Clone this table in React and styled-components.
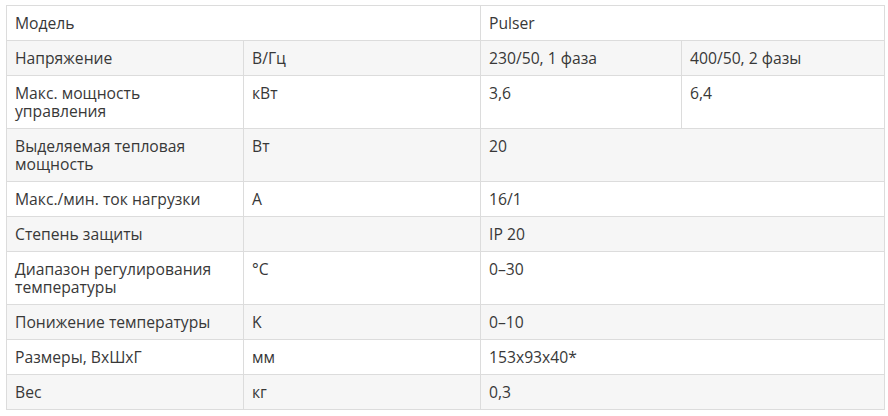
import React from "react";
import styled, { createGlobalStyle } from "styled-components";

const Global = createGlobalStyle`
  html, body { margin: 0; padding: 0; background: #fff; }
  body { font-family: "Open Sans", "Liberation Sans", sans-serif; }
`;

const Wrap = styled.div`
  padding: 5px 5px 0 6px;
`;

const Table = styled.table`
  border-collapse: collapse;
  table-layout: fixed;
  width: 878px;
  font-family: "Open Sans", "Liberation Sans", sans-serif;
  font-size: 15.7px;
  line-height: 18px;
  color: #383838;
`;

const Row = styled.tr`
  background: ${(p) => (p.$shaded ? "#f6f6f6" : "#fff")};
`;

const Cell = styled.td`
  border: 1px solid #dcdcdc;
  padding: 8px 14px 8px 8px;
  vertical-align: top;
  text-align: left;
  font-weight: 400;
`;

const rows = [
  { name: "Напряжение", unit: "В/Гц", values: ["230/50, 1 фаза", "400/50, 2 фазы"] },
  { name: "Макс. мощность управления", unit: "кВт", values: ["3,6", "6,4"] },
  { name: "Выделяемая тепловая мощность", unit: "Вт", values: ["20"] },
  { name: "Макс./мин. ток нагрузки", unit: "А", values: ["16/1"] },
  { name: "Степень защиты", unit: "", values: ["IP 20"] },
  { name: "Диапазон регулирования температуры", unit: "°C", values: ["0–30"] },
  { name: "Понижение температуры", unit: "K", values: ["0–10"] },
  { name: "Размеры, ВхШхГ", unit: "мм", values: ["153x93x40*"] },
  { name: "Вес", unit: "кг", values: ["0,3"] },
];

export default function App() {
  return (
    <>
      <Global />
      <Wrap>
        <Table>
          <colgroup>
            <col style={{ width: 237 }} />
            <col style={{ width: 237 }} />
            <col style={{ width: 201 }} />
            <col style={{ width: 203 }} />
          </colgroup>
          <tbody>
            <Row>
              <Cell colSpan={2}>Модель</Cell>
              <Cell colSpan={2}>Pulser</Cell>
            </Row>
            {rows.map((r, i) => (
              <Row key={r.name} $shaded={i % 2 === 0}>
                <Cell>{r.name}</Cell>
                <Cell>{r.unit}</Cell>
                {r.values.length === 2 ? (
                  <>
                    <Cell>{r.values[0]}</Cell>
                    <Cell>{r.values[1]}</Cell>
                  </>
                ) : (
                  <Cell colSpan={2}>{r.values[0]}</Cell>
                )}
              </Row>
            ))}
          </tbody>
        </Table>
      </Wrap>
    </>
  );
}
